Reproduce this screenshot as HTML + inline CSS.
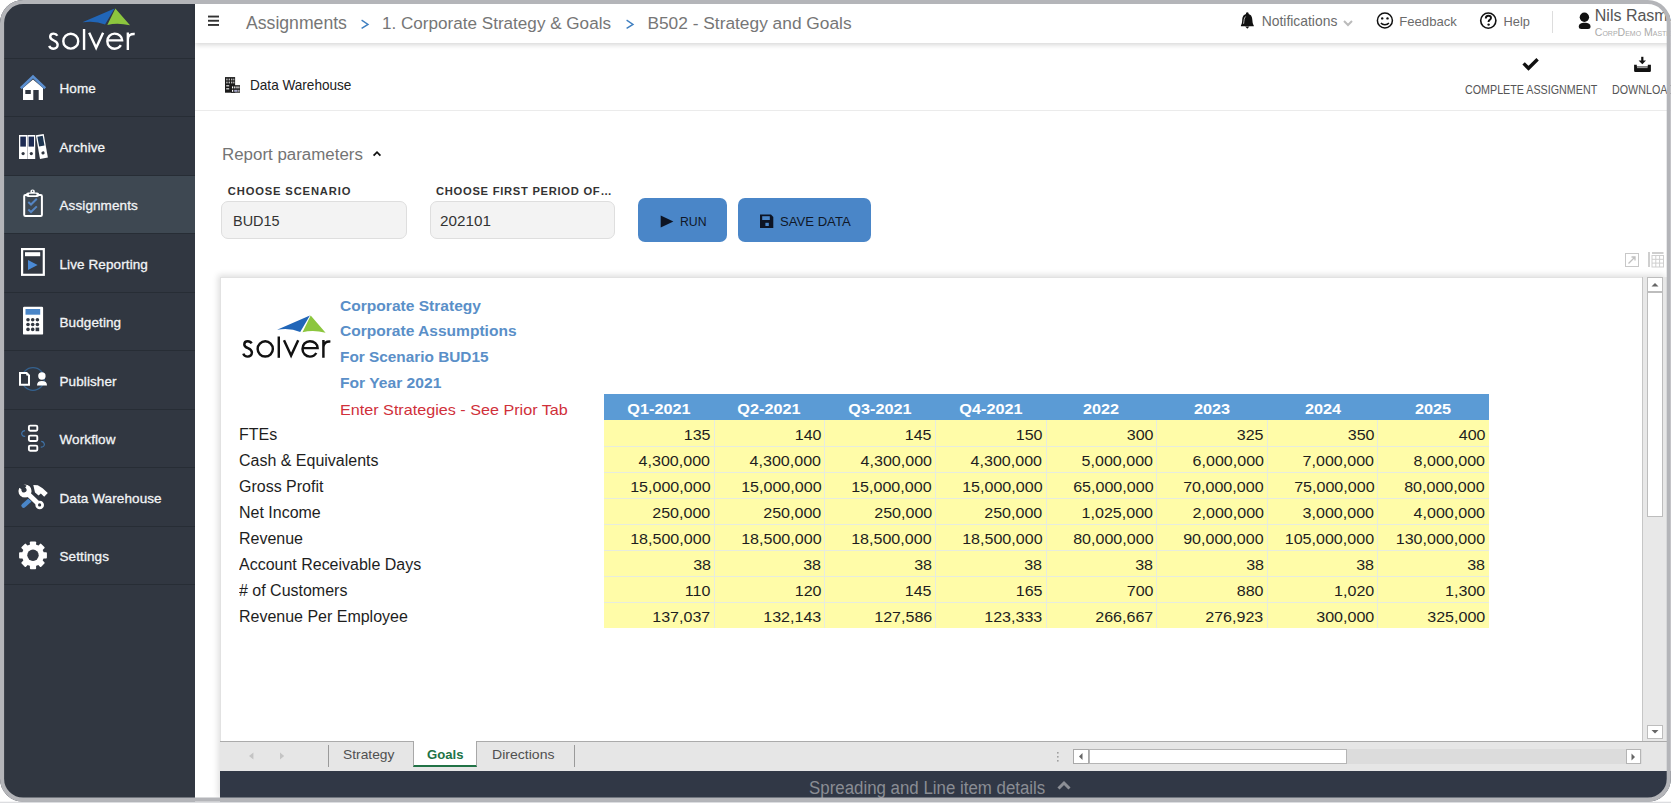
<!DOCTYPE html>
<html><head><meta charset="utf-8"><style>
html,body{margin:0;padding:0;width:1671px;height:803px;overflow:hidden;background:#fff;}
body{position:relative;font-family:"Liberation Sans", sans-serif;}
.t{position:absolute;white-space:nowrap;line-height:1;}
.r{position:absolute;}
</style></head><body>
<div class="r" style="left:0px;top:0px;width:195px;height:803px;background:#313741"></div>
<div class="r" style="left:0px;top:175.5px;width:195px;height:58px;background:#3e4852"></div>
<div class="r" style="left:0px;top:57.5px;width:195px;height:1px;background:#272d35"></div>
<div class="r" style="left:0px;top:116.0px;width:195px;height:1px;background:#272d35"></div>
<div class="r" style="left:0px;top:174.5px;width:195px;height:1px;background:#272d35"></div>
<div class="r" style="left:0px;top:233.0px;width:195px;height:1px;background:#272d35"></div>
<div class="r" style="left:0px;top:291.5px;width:195px;height:1px;background:#272d35"></div>
<div class="r" style="left:0px;top:350.0px;width:195px;height:1px;background:#272d35"></div>
<div class="r" style="left:0px;top:408.5px;width:195px;height:1px;background:#272d35"></div>
<div class="r" style="left:0px;top:467.0px;width:195px;height:1px;background:#272d35"></div>
<div class="r" style="left:0px;top:525.5px;width:195px;height:1px;background:#272d35"></div>
<div class="r" style="left:0px;top:584.0px;width:195px;height:1px;background:#272d35"></div>
<div class="t" style="left:59.50px;top:82px;font-size:13.5px;color:#f2f4f6;font-weight:400;-webkit-text-stroke:0.3px #f2f4f6;letter-spacing:0.1px">Home</div>
<div class="t" style="left:59.50px;top:141px;font-size:13.5px;color:#f2f4f6;font-weight:400;-webkit-text-stroke:0.3px #f2f4f6;letter-spacing:0.1px">Archive</div>
<div class="t" style="left:59.50px;top:199px;font-size:13.5px;color:#f2f4f6;font-weight:400;-webkit-text-stroke:0.3px #f2f4f6;letter-spacing:0.1px">Assignments</div>
<div class="t" style="left:59.50px;top:258px;font-size:13.5px;color:#f2f4f6;font-weight:400;-webkit-text-stroke:0.3px #f2f4f6;letter-spacing:0.1px">Live Reporting</div>
<div class="t" style="left:59.50px;top:316px;font-size:13.5px;color:#f2f4f6;font-weight:400;-webkit-text-stroke:0.3px #f2f4f6;letter-spacing:0.1px">Budgeting</div>
<div class="t" style="left:59.50px;top:375px;font-size:13.5px;color:#f2f4f6;font-weight:400;-webkit-text-stroke:0.3px #f2f4f6;letter-spacing:0.1px">Publisher</div>
<div class="t" style="left:59.50px;top:433px;font-size:13.5px;color:#f2f4f6;font-weight:400;-webkit-text-stroke:0.3px #f2f4f6;letter-spacing:0.1px">Workflow</div>
<div class="t" style="left:59.50px;top:492px;font-size:13.5px;color:#f2f4f6;font-weight:400;-webkit-text-stroke:0.3px #f2f4f6;letter-spacing:0.1px">Data Warehouse</div>
<div class="t" style="left:59.50px;top:550px;font-size:13.5px;color:#f2f4f6;font-weight:400;-webkit-text-stroke:0.3px #f2f4f6;letter-spacing:0.1px">Settings</div>
<svg class="r" style="left:44.1px;top:3.44px" width="98.20" height="51.06" viewBox="0 0 100 52">
<path d="M39.1 19.7 L71.9 5.5 L62.2 21.9 Q52 17.6 39.1 19.7Z" fill="#2166b8"/>
<path d="M72.7 5.5 L87.6 22.7 Q75 19.6 64.5 22.3Z" fill="#8cc63e"/>
<g fill="none" stroke="#ffffff" stroke-width="2.45">
<path d="M13.6 33.4 C12.8 31.9 11.4 31.2 9.8 31.2 C7.6 31.2 6.3 32.6 6.3 34.4 C6.3 36.4 7.9 37.3 10 38.2 C12.5 39.3 13.9 40.5 13.9 42.6 C13.9 45.1 12 46.6 9.7 46.6 C7.6 46.6 6 45.5 5.3 43.6"/>
<circle cx="27.25" cy="38.9" r="7.6"/>
<path d="M40.8 26.5 V47.8"/>
<path d="M46 30.2 L53.1 45.6 L60.2 30.2" stroke-linejoin="miter"/>
<path d="M64.5 38.1 H79.6 C79.6 34.2 76.2 31.2 71.9 31.2 C67.6 31.2 64.5 34.6 64.5 38.9 C64.5 43.3 67.8 46.6 71.9 46.6 C74.8 46.6 77 45.2 78.3 43"/>
<path d="M85.4 30 V47.8 M85.4 37 C85.6 33.2 88.2 31.2 92.4 31.6"/>
</g></svg>

<svg class="r" style="left:14px;top:68px" width="40" height="40" viewBox="0 0 40 40">
<path d="M9 20 L19 11.5 L29 20 V32 H9Z" fill="#fff"/>
<rect x="11.3" y="22" width="5.5" height="4" fill="#313741"/>
<rect x="19.3" y="22" width="5.4" height="10" fill="#313741"/>
<path d="M6.8 20.2 L19 8.6 L31.2 20.2" fill="none" stroke="#5b8fd0" stroke-width="2.6"/>
</svg>
<svg class="r" style="left:14px;top:128px" width="40" height="40" viewBox="0 0 40 40">
<rect x="5" y="7" width="8.2" height="24" fill="#fff"/>
<rect x="13.4" y="7" width="7.8" height="24" fill="#fff"/>
<rect x="6.3" y="8.6" width="5.6" height="10" fill="#1d2b52"/>
<rect x="14.6" y="8.6" width="5.4" height="10" fill="#1d2b52"/>
<circle cx="9.1" cy="25.6" r="1.6" fill="#313741"/><circle cx="17.3" cy="25.6" r="1.6" fill="#313741"/>
<g transform="rotate(-10 26 31)"><rect x="26" y="7" width="8" height="24" fill="#fff"/><rect x="27.3" y="8.6" width="5.4" height="10" fill="#1d3550"/><circle cx="30" cy="25.6" r="1.6" fill="#313741"/></g>
</svg>
<svg class="r" style="left:14px;top:186px" width="40" height="40" viewBox="0 0 40 40">
<rect x="10.2" y="9" width="17.7" height="21" rx="1.2" fill="none" stroke="#fff" stroke-width="2"/>
<rect x="12" y="6.4" width="13.2" height="4.6" rx="2.2" fill="#fff"/>
<circle cx="18.6" cy="5.9" r="2.3" fill="#fff"/>
<circle cx="18.6" cy="5.2" r="0.7" fill="#3e4852"/>
<rect x="14.8" y="7.7" width="7.8" height="1.6" rx="0.8" fill="#3e4852"/>
<path d="M14.3 16 L17 18.5 L22.8 12.8 M14.3 23.5 L17 26 L22.8 20.4" fill="none" stroke="#5585c4" stroke-width="2"/>
</svg>
<svg class="r" style="left:14px;top:244px" width="40" height="40" viewBox="0 0 40 40">
<rect x="8.1" y="5.1" width="21.7" height="25.7" fill="none" stroke="#fff" stroke-width="2.2"/>
<rect x="11" y="8.2" width="15.2" height="4" fill="#fff"/>
<path d="M14 16 L23.6 21 L14 26Z" fill="#4a8ad6"/>
</svg>
<svg class="r" style="left:14px;top:304px" width="40" height="40" viewBox="0 0 40 40">
<rect x="9" y="2.7" width="20.1" height="27.9" rx="1.2" fill="#fff"/>
<rect x="11.5" y="5" width="14.7" height="5.7" fill="#4a86c8"/>
<g fill="#313741"><circle cx="14" cy="15.7" r="1.8"/><circle cx="18.7" cy="15.7" r="1.8"/><circle cx="23.4" cy="15.7" r="1.8"/>
<circle cx="14" cy="20.5" r="1.8"/><circle cx="18.7" cy="20.5" r="1.8"/><circle cx="23.4" cy="20.5" r="1.8"/>
<circle cx="14" cy="25.4" r="1.8"/><circle cx="18.7" cy="25.4" r="1.8"/><rect x="21.6" y="23.6" width="3.6" height="3.6"/></g>
</svg>
<svg class="r" style="left:14px;top:362px" width="40" height="40" viewBox="0 0 40 40">
<circle cx="19" cy="17" r="11.3" fill="none" stroke="#35628f" stroke-width="1.2"/>
<path d="M6 11 H12.6 L15 13.4 V22.7 H6Z" fill="#313741" stroke="#fff" stroke-width="2"/>
<path d="M12.3 10.5 V13.6 H15.4" fill="#fff"/>
<rect x="17" y="8" width="4" height="18" fill="#313741"/>
<circle cx="27.9" cy="14" r="3.7" fill="#fff"/>
<path d="M23 23.5 C23 20.4 24.6 19 27.9 19 C31.3 19 33 20.4 33 23.5Z" fill="#fff"/>
</svg>
<svg class="r" style="left:14px;top:420px" width="40" height="40" viewBox="0 0 40 40">
<g fill="none" stroke="#fff" stroke-width="1.9">
<rect x="14.9" y="5.6" width="8.4" height="5.2" rx="1.2"/>
<rect x="14.9" y="15.6" width="8.4" height="5.4" rx="1.2"/>
<rect x="14.9" y="25.6" width="8.4" height="5.2" rx="1.2"/></g>
<path d="M11 10.6 C8 10.8 7 13.5 8.2 15.2 C9 16.3 10 16.6 11.2 16.4" fill="none" stroke="#3f73a8" stroke-width="1.2"/>
<path d="M27.2 21.4 C30.2 21.6 31 24.3 29.8 26 C29 27 28 27.3 26.8 27.2" fill="none" stroke="#3f73a8" stroke-width="1.2"/>
</svg>
<svg class="r" style="left:14px;top:478px" width="40" height="40" viewBox="0 0 40 40">
<path d="M9.6 27.6 L16.4 21.6" stroke="#4a86c8" stroke-width="4.6" stroke-linecap="round"/>
<path d="M19.3 7 L23.8 7.2 L28.6 10.2 L33.8 15 L30.2 18.8 L26.8 15.6 L24.6 17.4 L21 14.5 Z" fill="#fff"/>
<g stroke="#313741" stroke-width="1">
<path d="M13 15 L25.7 27" stroke-width="6.4"/>
<circle cx="11" cy="13" r="7.1"/>
</g>
<path d="M13 15 L25.7 27" stroke="#fff" stroke-width="5"/>
<circle cx="25.7" cy="27" r="4.3" fill="#fff"/>
<circle cx="25.6" cy="26.9" r="1.6" fill="#313741"/>
<circle cx="11" cy="13" r="6.6" fill="#fff"/>
<g transform="rotate(-18 11 13)"><path d="M9.6 11.4 L4 5.8 L8.8 3 L14.2 8.4 Z" fill="#313741"/>
<circle cx="10.4" cy="11.6" r="2.6" fill="#313741"/></g>
</svg>
<svg class="r" style="left:14px;top:536px" width="40" height="40" viewBox="0 0 40 40">
<g transform="translate(19 19.3)" fill="#fff">
<circle r="11"/>
<rect x="-3.1" y="-13.9" width="6.2" height="6" rx="0.9"/>
<rect x="-3.1" y="-13.9" width="6.2" height="6" rx="0.9" transform="rotate(45)"/>
<rect x="-3.1" y="-13.9" width="6.2" height="6" rx="0.9" transform="rotate(90)"/>
<rect x="-3.1" y="-13.9" width="6.2" height="6" rx="0.9" transform="rotate(135)"/>
<rect x="-3.1" y="-13.9" width="6.2" height="6" rx="0.9" transform="rotate(180)"/>
<rect x="-3.1" y="-13.9" width="6.2" height="6" rx="0.9" transform="rotate(225)"/>
<rect x="-3.1" y="-13.9" width="6.2" height="6" rx="0.9" transform="rotate(270)"/>
<rect x="-3.1" y="-13.9" width="6.2" height="6" rx="0.9" transform="rotate(315)"/>
<circle r="5.7" fill="#313741"/>
</g></svg>
<div class="r" style="left:195px;top:0px;width:1476px;height:43px;background:#fff;box-shadow:0 2px 5px rgba(0,0,0,0.16);z-index:2"></div>
<svg class="r" style="left:207px;top:14px;z-index:3" width="14" height="14" viewBox="0 0 14 14"><g fill="#333"><rect x="1" y="1.6" width="11" height="1.9"/><rect x="1" y="5.8" width="11" height="1.9"/><rect x="1" y="10" width="11" height="1.9"/></g></svg>
<div class="t" style="left:246.00px;top:15px;font-size:17.64px;color:#767676;font-weight:400;z-index:3;">Assignments</div>
<svg class="r" style="left:355px;top:14px;z-index:3" width="20" height="20" viewBox="0 0 20 20"><path d="M6.6 6.2 L13 10.4 L6.6 14.4" stroke="#3f7fc0" stroke-width="1.4" fill="none"/></svg>
<div class="t" style="left:382.00px;top:15px;font-size:17.1px;color:#767676;font-weight:400;z-index:3;">1. Corporate Strategy &amp; Goals</div>
<svg class="r" style="left:619.5px;top:14px;z-index:3" width="20" height="20" viewBox="0 0 20 20"><path d="M6.6 6.2 L13 10.4 L6.6 14.4" stroke="#3f7fc0" stroke-width="1.4" fill="none"/></svg>
<div class="t" style="left:647.40px;top:15px;font-size:17.34px;color:#767676;font-weight:400;z-index:3;">B502 - Strategy and Goals</div>
<div class="t" style="left:1261.70px;top:15px;font-size:13.9px;color:#6b6b6b;font-weight:400;z-index:3;">Notifications</div>
<div class="t" style="left:1399.30px;top:15px;font-size:13.1px;color:#6b6b6b;font-weight:400;z-index:3;">Feedback</div>
<div class="t" style="left:1503.60px;top:16px;font-size:12.8px;color:#6b6b6b;font-weight:400;z-index:3;">Help</div>
<div class="t" style="left:1594.80px;top:8px;font-size:16px;color:#555;font-weight:400;z-index:3;">Nils Rasmussen</div>
<div class="t" style="left:1594.80px;top:27px;font-size:10.5px;color:#aaa;font-weight:400;z-index:3;font-variant:small-caps;">CorpDemo Master</div>
<svg class="r" style="left:1236px;top:6px;z-index:3" width="24" height="28" viewBox="0 0 24 28">
<path d="M11.3 6.3 C10.2 6.3 9.8 7.2 10 8 C7 8.8 6.3 11.5 6.2 14.5 C6 17.6 5.3 18.8 4.9 19.4 L4.9 20.2 H17.8 V19.4 C17.2 18.6 16.6 17.4 16.4 14.5 C16.2 11.4 15.6 8.8 12.6 8 C12.8 7.2 12.4 6.3 11.3 6.3Z" fill="#111"/>
<path d="M9.2 20.6 L11.3 22.7 L13.4 20.6Z" fill="#111"/>
<path d="M7.6 17.8 C8 15 8 12 9.6 10.5" stroke="#fff" stroke-width="0.7" fill="none"/>
</svg>
<svg class="r" style="left:1342px;top:18px;z-index:3" width="12" height="10" viewBox="0 0 12 10"><path d="M2 3 L6 7 L10 3" stroke="#bbb" stroke-width="2" fill="none"/></svg>
<svg class="r" style="left:1372px;top:6px;z-index:3" width="28" height="28" viewBox="0 0 28 28">
<circle cx="12.9" cy="14.5" r="7.5" fill="none" stroke="#111" stroke-width="1.5"/>
<circle cx="10.2" cy="12.4" r="1.2" fill="#111"/><circle cx="15.5" cy="12.4" r="1.2" fill="#111"/>
<path d="M8.9 17 C10.6 19.3 15.2 19.3 16.9 17" stroke="#111" stroke-width="1.4" fill="none"/>
</svg>
<svg class="r" style="left:1476px;top:6px;z-index:3" width="24" height="28" viewBox="0 0 24 28">
<circle cx="12.3" cy="14.6" r="7.6" fill="none" stroke="#111" stroke-width="1.6"/>
<path d="M9.8 12.4 C9.8 10.6 11 9.7 12.4 9.7 C13.9 9.7 15 10.6 15 12 C15 13.6 13 13.8 12.6 15.4 V16" stroke="#111" stroke-width="1.9" fill="none"/>
<circle cx="12.6" cy="18.6" r="1.2" fill="#111"/>
</svg>
<div class="r" style="left:1552px;top:11px;width:1px;height:22px;background:#ddd;z-index:3"></div>
<svg class="r" style="left:1572px;top:6px;z-index:3" width="24" height="28" viewBox="0 0 24 28">
<circle cx="12.4" cy="11.3" r="4.7" fill="#111"/>
<path d="M6.8 20.6 C6.8 17.8 9 16.7 12.6 16.7 C16.3 16.7 18.5 17.8 18.5 20.6 C18.5 22.4 17.6 23 16 23 H9.3 C7.7 23 6.8 22.4 6.8 20.6Z" fill="#111"/>
</svg>
<div class="r" style="left:195px;top:110px;width:1476px;height:1px;background:#ebebeb"></div>
<svg class="r" style="left:218px;top:70px" width="28" height="28" viewBox="0 0 28 28">
<rect x="7" y="7.1" width="10.1" height="15.6" fill="#1a1a1a"/>
<rect x="13" y="15.2" width="9" height="7.5" fill="#1a1a1a"/>
<g fill="#bbb"><rect x="8.2" y="8.6" width="1.4" height="1.8"/><rect x="10.6" y="8.6" width="1.4" height="1.8"/><rect x="13" y="8.6" width="1.4" height="1.8"/><rect x="15.2" y="8.6" width="1.2" height="1.8"/>
<rect x="8.2" y="11.6" width="1.4" height="1.8"/><rect x="10.6" y="11.6" width="1.4" height="1.8"/><rect x="13" y="11.6" width="1.4" height="1.8"/><rect x="15.2" y="11.6" width="1.2" height="1.8"/>
<rect x="8.2" y="15" width="3" height="1.5"/><rect x="8.2" y="18" width="3" height="1.5"/></g>
<g fill="#fff"><rect x="14" y="16.4" width="1.2" height="2"/><rect x="16.2" y="16.4" width="1.2" height="2"/><rect x="18.4" y="16.4" width="1.2" height="2"/><rect x="20.4" y="16.4" width="1" height="2"/>
<rect x="14" y="19.8" width="1.2" height="2"/><rect x="16.2" y="19.8" width="3.4" height="2" fill="#aac"/><rect x="20.4" y="19.8" width="1" height="2"/></g>
</svg>
<div class="t" style="left:249.80px;top:78px;font-size:14.8px;color:#222;font-weight:400;transform:scaleX(0.9180);transform-origin:left;">Data Warehouse</div>
<svg class="r" style="left:1516px;top:50px" width="150" height="30" viewBox="0 0 150 30">
<path d="M7.6 13.4 L12.5 18.3 L21.6 9.2" stroke="#111" stroke-width="3.4" fill="none"/>
<path d="M126.3 6.8 V11.6" stroke="#111" stroke-width="2.2" fill="none"/>
<path d="M122.6 10.4 L126.3 14.2 L130 10.4Z" fill="#111"/>
<path d="M118.1 14.8 H120.8 V16.6 H131.8 V14.8 H134.9 V20.8 Q134.9 22 133.7 22 H119.3 Q118.1 22 118.1 20.8Z" fill="#111"/>
<rect x="121" y="17.2" width="10.6" height="0.9" fill="#bbb"/>
</svg>
<div class="t" style="left:1464.50px;top:84px;font-size:12.1px;color:#555;font-weight:400;transform:scaleX(0.8860);transform-origin:left;">COMPLETE ASSIGNMENT</div>
<div class="t" style="left:1611.60px;top:84px;font-size:12.1px;color:#555;font-weight:400;transform:scaleX(0.8860);transform-origin:left;">DOWNLOAD</div>
<div class="t" style="left:221.60px;top:146px;font-size:17.3px;color:#747474;font-weight:400;transform:scaleX(0.9780);transform-origin:left;">Report parameters</div>
<svg class="r" style="left:370px;top:148px" width="14" height="12" viewBox="0 0 14 12"><path d="M3.6 7.6 L7 4.2 L10.4 7.6" stroke="#111" stroke-width="1.8" fill="none"/></svg>
<div class="t" style="left:227.80px;top:186px;font-size:11.2px;color:#333;font-weight:700;letter-spacing:0.85px">CHOOSE SCENARIO</div>
<div class="t" style="left:436.00px;top:186px;font-size:11.2px;color:#333;font-weight:700;letter-spacing:0.72px">CHOOSE FIRST PERIOD OF…</div>
<div class="r" style="left:221px;top:201.4px;width:185.6px;height:37.6px;background:#f3f3f3;border:1px solid #dedede;border-radius:7px;box-sizing:border-box"></div>
<div class="r" style="left:430px;top:201.4px;width:185.4px;height:37.6px;background:#f3f3f3;border:1px solid #dedede;border-radius:7px;box-sizing:border-box"></div>
<div class="t" style="left:232.60px;top:214px;font-size:14.8px;color:#333;font-weight:400;transform:scaleX(0.9770);transform-origin:left;">BUD15</div>
<div class="t" style="left:440.00px;top:214px;font-size:14.8px;color:#333;font-weight:400;transform:scaleX(1.0300);transform-origin:left;">202101</div>
<div class="r" style="left:637.5px;top:198.2px;width:89.5px;height:43.4px;background:#4a86c8;border-radius:7px"></div>
<div class="r" style="left:738px;top:198.2px;width:133px;height:43.4px;background:#4a86c8;border-radius:7px"></div>
<svg class="r" style="left:655px;top:210px" width="24" height="22" viewBox="0 0 24 22"><path d="M5.7 5.4 L18.4 11.4 L5.7 17.4Z" fill="#0d1424"/></svg>
<svg class="r" style="left:755px;top:210px" width="24" height="22" viewBox="0 0 24 22"><path d="M5 4.6 H16 L18.3 6.9 V18 H5Z" fill="#0d1424"/><rect x="7.2" y="6.2" width="7.6" height="3.8" fill="#4a86c8"/><rect x="10.4" y="12.8" width="3.4" height="3.2" fill="#4a86c8"/></svg>
<div class="t" style="left:680.00px;top:215px;font-size:13.4px;color:#101828;font-weight:400;transform:scaleX(0.9170);transform-origin:left;">RUN</div>
<div class="t" style="left:780.00px;top:215px;font-size:13.4px;color:#101828;font-weight:400;transform:scaleX(0.9790);transform-origin:left;">SAVE DATA</div>
<div class="r" style="left:219.5px;top:276.5px;width:1447px;height:522px;background:#fff;border-top:1px solid #e2e2e2;border-left:1px solid #e2e2e2;box-shadow:-2px -2px 6px rgba(0,0,0,0.13);box-sizing:border-box"></div>
<svg class="r" style="left:1620px;top:248px" width="50" height="24" viewBox="0 0 50 24">
<rect x="5.5" y="5.5" width="13" height="13" fill="none" stroke="#c8c8c8" stroke-width="1"/>
<path d="M8.5 15.5 L15 9 M11.5 9 H15 V12.5" stroke="#c0c0c0" stroke-width="1.3" fill="none"/>
<g fill="#cfcfcf"><rect x="28" y="4" width="2" height="15"/><rect x="32" y="4" width="11.5" height="2"/>
<rect x="32" y="7.5" width="11.5" height="11.5" fill="none" stroke="#cfcfcf" stroke-width="1"/></g>
<path d="M32 11.3 H43.5 M32 15.1 H43.5 M35.8 7.5 V19 M39.6 7.5 V19" stroke="#cfcfcf" stroke-width="1"/>
</svg>
<div class="r" style="left:1642px;top:277px;width:25px;height:464px;background:#e8e8e8;border-left:1px solid #c6c6c6;box-sizing:border-box"></div>
<div class="r" style="left:1647px;top:277.4px;width:15.5px;height:15px;background:#fff;border:1px solid #bdbdbd;box-sizing:border-box"></div>
<div class="r" style="left:1647px;top:292.3px;width:15.7px;height:224.7px;background:#fff;border:1px solid #bdbdbd;box-sizing:border-box"></div>
<div class="r" style="left:1647px;top:724.6px;width:15.5px;height:14.5px;background:#fff;border:1px solid #bdbdbd;box-sizing:border-box"></div>
<svg class="r" style="left:1647px;top:277px" width="16" height="16" viewBox="0 0 16 16"><path d="M4.5 9.5 L8 6 L11.5 9.5Z" fill="#666"/></svg>
<svg class="r" style="left:1647px;top:724px" width="16" height="16" viewBox="0 0 16 16"><path d="M4.5 6 L8 9.5 L11.5 6Z" fill="#666"/></svg>
<div class="r" style="left:220px;top:741px;width:1447px;height:30px;background:#e6e6e6;border-top:1px solid #ababab;box-sizing:border-box"></div>
<svg class="r" style="left:240px;top:745px" width="60" height="22" viewBox="0 0 60 22"><path d="M13.4 7.5 L9 11 L13.4 14.5Z M40 7.5 L44.2 11 L40 14.5Z" fill="#c4c4c4"/></svg>
<div class="r" style="left:328px;top:745px;width:1px;height:21.5px;background:#9a9a9a"></div>
<div class="r" style="left:573.5px;top:745px;width:1px;height:21.5px;background:#9a9a9a"></div>
<div class="r" style="left:413px;top:741px;width:64.3px;height:26.3px;background:#fff;border-left:1px solid #a8a8a8;border-right:1px solid #a8a8a8;border-bottom:2px solid #217346;box-sizing:border-box"></div>
<div class="t" style="left:342.60px;top:749px;font-size:12.9px;color:#505050;font-weight:400;transform:scaleX(1.0700);transform-origin:left;">Strategy</div>
<div class="t" style="left:427.00px;top:749px;font-size:12.9px;color:#217346;font-weight:700;transform:scaleX(1.0180);transform-origin:left;">Goals</div>
<div class="t" style="left:491.50px;top:749px;font-size:12.9px;color:#505050;font-weight:400;transform:scaleX(1.0900);transform-origin:left;">Directions</div>
<svg class="r" style="left:1050px;top:745px" width="20" height="22" viewBox="0 0 20 22"><g fill="#a0a0a0"><rect x="7" y="7" width="1.6" height="1.6"/><rect x="7" y="11" width="1.6" height="1.6"/><rect x="7" y="15" width="1.6" height="1.6"/></g></svg>
<div class="r" style="left:1072.6px;top:748.8px;width:569px;height:15.7px;background:#dcdcdc"></div>
<div class="r" style="left:1072.6px;top:748.8px;width:16.5px;height:15.7px;background:#fff;border:1px solid #a9a9a9;box-sizing:border-box"></div>
<div class="r" style="left:1088.9px;top:748.8px;width:258.6px;height:15.7px;background:#fff;border:1px solid #b5b5b5;box-sizing:border-box"></div>
<div class="r" style="left:1625.8px;top:749.4px;width:15.5px;height:15px;background:#fff;border:1px solid #b5b5b5;box-sizing:border-box"></div>
<svg class="r" style="left:1072px;top:748px" width="18" height="18" viewBox="0 0 18 18"><path d="M10.5 5 L7 8.5 L10.5 12Z" fill="#666"/></svg>
<svg class="r" style="left:1625px;top:749px" width="18" height="18" viewBox="0 0 18 18"><path d="M6.5 4.5 L10 8 L6.5 11.5Z" fill="#666"/></svg>
<div class="r" style="left:220px;top:771px;width:1451px;height:32px;background:#313846"></div>
<div class="t" style="left:809.40px;top:779px;font-size:18px;color:#8a8d94;font-weight:400;transform:scaleX(0.9370);transform-origin:left;">Spreading and Line item details</div>
<svg class="r" style="left:1054px;top:776px" width="20" height="18" viewBox="0 0 20 18"><path d="M4.5 12.5 L10 7 L15.5 12.5" stroke="#8c8f96" stroke-width="3" fill="none"/></svg>
<svg class="r" style="left:237.8px;top:310px" width="100.00" height="52.00" viewBox="0 0 100 52">
<path d="M39.1 19.7 L71.9 5.5 L62.2 21.9 Q52 17.6 39.1 19.7Z" fill="#2166b8"/>
<path d="M72.7 5.5 L87.6 22.7 Q75 19.6 64.5 22.3Z" fill="#8cc63e"/>
<g fill="none" stroke="#111111" stroke-width="2.45">
<path d="M13.6 33.4 C12.8 31.9 11.4 31.2 9.8 31.2 C7.6 31.2 6.3 32.6 6.3 34.4 C6.3 36.4 7.9 37.3 10 38.2 C12.5 39.3 13.9 40.5 13.9 42.6 C13.9 45.1 12 46.6 9.7 46.6 C7.6 46.6 6 45.5 5.3 43.6"/>
<circle cx="27.25" cy="38.9" r="7.6"/>
<path d="M40.8 26.5 V47.8"/>
<path d="M46 30.2 L53.1 45.6 L60.2 30.2" stroke-linejoin="miter"/>
<path d="M64.5 38.1 H79.6 C79.6 34.2 76.2 31.2 71.9 31.2 C67.6 31.2 64.5 34.6 64.5 38.9 C64.5 43.3 67.8 46.6 71.9 46.6 C74.8 46.6 77 45.2 78.3 43"/>
<path d="M85.4 30 V47.8 M85.4 37 C85.6 33.2 88.2 31.2 92.4 31.6"/>
</g></svg>
<div class="t" style="left:339.60px;top:299px;font-size:14.4px;color:#5a8fc8;font-weight:700;transform:scaleX(1.0819);transform-origin:left">Corporate Strategy</div>
<div class="t" style="left:339.60px;top:324px;font-size:14.4px;color:#5a8fc8;font-weight:700;transform:scaleX(1.0806);transform-origin:left">Corporate Assumptions</div>
<div class="t" style="left:339.60px;top:350px;font-size:14.4px;color:#5a8fc8;font-weight:700;transform:scaleX(1.0674);transform-origin:left">For Scenario BUD15</div>
<div class="t" style="left:339.60px;top:376px;font-size:14.4px;color:#5a8fc8;font-weight:700;transform:scaleX(1.0854);transform-origin:left">For Year 2021</div>
<div class="t" style="left:339.90px;top:402px;font-size:15.0px;color:#d0303a;font-weight:400;transform:scaleX(1.077);transform-origin:left">Enter Strategies - See Prior Tab</div>
<div class="r" style="left:603.5px;top:393.7px;width:885.12px;height:26.6px;background:#5b9bd5"></div>
<div class="r" style="left:603.5px;top:420.3px;width:885.12px;height:208px;background:#fffca8"></div>
<div class="r" style="left:713.64px;top:420.3px;width:1px;height:208px;background:#e7ecde"></div>
<div class="r" style="left:824.28px;top:420.3px;width:1px;height:208px;background:#e7ecde"></div>
<div class="r" style="left:934.92px;top:420.3px;width:1px;height:208px;background:#e7ecde"></div>
<div class="r" style="left:1045.56px;top:420.3px;width:1px;height:208px;background:#e7ecde"></div>
<div class="r" style="left:1156.2px;top:420.3px;width:1px;height:208px;background:#e7ecde"></div>
<div class="r" style="left:1266.84px;top:420.3px;width:1px;height:208px;background:#e7ecde"></div>
<div class="r" style="left:1377.48px;top:420.3px;width:1px;height:208px;background:#e7ecde"></div>
<div class="r" style="left:603.5px;top:445.8px;width:885.12px;height:1px;background:#e7ecde"></div>
<div class="r" style="left:603.5px;top:471.8px;width:885.12px;height:1px;background:#e7ecde"></div>
<div class="r" style="left:603.5px;top:497.8px;width:885.12px;height:1px;background:#e7ecde"></div>
<div class="r" style="left:603.5px;top:523.8px;width:885.12px;height:1px;background:#e7ecde"></div>
<div class="r" style="left:603.5px;top:549.8px;width:885.12px;height:1px;background:#e7ecde"></div>
<div class="r" style="left:603.5px;top:575.8px;width:885.12px;height:1px;background:#e7ecde"></div>
<div class="r" style="left:603.5px;top:601.8px;width:885.12px;height:1px;background:#e7ecde"></div>
<div class="t" style="left:358.82px;width:600px;text-align:center;top:401px;font-size:15.2px;color:#fff;font-weight:700;transform:scaleX(1.0700);transform-origin:center;">Q1-2021</div>
<div class="t" style="left:469.46px;width:600px;text-align:center;top:401px;font-size:15.2px;color:#fff;font-weight:700;transform:scaleX(1.0700);transform-origin:center;">Q2-2021</div>
<div class="t" style="left:580.10px;width:600px;text-align:center;top:401px;font-size:15.2px;color:#fff;font-weight:700;transform:scaleX(1.0700);transform-origin:center;">Q3-2021</div>
<div class="t" style="left:690.74px;width:600px;text-align:center;top:401px;font-size:15.2px;color:#fff;font-weight:700;transform:scaleX(1.0700);transform-origin:center;">Q4-2021</div>
<div class="t" style="left:801.38px;width:600px;text-align:center;top:401px;font-size:15.2px;color:#fff;font-weight:700;transform:scaleX(1.0700);transform-origin:center;">2022</div>
<div class="t" style="left:912.02px;width:600px;text-align:center;top:401px;font-size:15.2px;color:#fff;font-weight:700;transform:scaleX(1.0700);transform-origin:center;">2023</div>
<div class="t" style="left:1022.66px;width:600px;text-align:center;top:401px;font-size:15.2px;color:#fff;font-weight:700;transform:scaleX(1.0700);transform-origin:center;">2024</div>
<div class="t" style="left:1133.30px;width:600px;text-align:center;top:401px;font-size:15.2px;color:#fff;font-weight:700;transform:scaleX(1.0700);transform-origin:center;">2025</div>
<div class="t" style="left:238.80px;top:427px;font-size:15.6px;color:#1e1e1e;font-weight:400;transform:scaleX(1.0250);transform-origin:left;">FTEs</div>
<div class="t" style="right:960.46px;top:427px;font-size:15.3px;color:#1e1e1e;font-weight:400;transform:scaleX(1.0500);transform-origin:right;">135</div>
<div class="t" style="right:849.82px;top:427px;font-size:15.3px;color:#1e1e1e;font-weight:400;transform:scaleX(1.0500);transform-origin:right;">140</div>
<div class="t" style="right:739.18px;top:427px;font-size:15.3px;color:#1e1e1e;font-weight:400;transform:scaleX(1.0500);transform-origin:right;">145</div>
<div class="t" style="right:628.54px;top:427px;font-size:15.3px;color:#1e1e1e;font-weight:400;transform:scaleX(1.0500);transform-origin:right;">150</div>
<div class="t" style="right:517.90px;top:427px;font-size:15.3px;color:#1e1e1e;font-weight:400;transform:scaleX(1.0500);transform-origin:right;">300</div>
<div class="t" style="right:407.26px;top:427px;font-size:15.3px;color:#1e1e1e;font-weight:400;transform:scaleX(1.0500);transform-origin:right;">325</div>
<div class="t" style="right:296.62px;top:427px;font-size:15.3px;color:#1e1e1e;font-weight:400;transform:scaleX(1.0500);transform-origin:right;">350</div>
<div class="t" style="right:185.98px;top:427px;font-size:15.3px;color:#1e1e1e;font-weight:400;transform:scaleX(1.0500);transform-origin:right;">400</div>
<div class="t" style="left:238.80px;top:453px;font-size:15.6px;color:#1e1e1e;font-weight:400;transform:scaleX(1.0250);transform-origin:left;">Cash &amp; Equivalents</div>
<div class="t" style="right:960.46px;top:453px;font-size:15.3px;color:#1e1e1e;font-weight:400;transform:scaleX(1.0500);transform-origin:right;">4,300,000</div>
<div class="t" style="right:849.82px;top:453px;font-size:15.3px;color:#1e1e1e;font-weight:400;transform:scaleX(1.0500);transform-origin:right;">4,300,000</div>
<div class="t" style="right:739.18px;top:453px;font-size:15.3px;color:#1e1e1e;font-weight:400;transform:scaleX(1.0500);transform-origin:right;">4,300,000</div>
<div class="t" style="right:628.54px;top:453px;font-size:15.3px;color:#1e1e1e;font-weight:400;transform:scaleX(1.0500);transform-origin:right;">4,300,000</div>
<div class="t" style="right:517.90px;top:453px;font-size:15.3px;color:#1e1e1e;font-weight:400;transform:scaleX(1.0500);transform-origin:right;">5,000,000</div>
<div class="t" style="right:407.26px;top:453px;font-size:15.3px;color:#1e1e1e;font-weight:400;transform:scaleX(1.0500);transform-origin:right;">6,000,000</div>
<div class="t" style="right:296.62px;top:453px;font-size:15.3px;color:#1e1e1e;font-weight:400;transform:scaleX(1.0500);transform-origin:right;">7,000,000</div>
<div class="t" style="right:185.98px;top:453px;font-size:15.3px;color:#1e1e1e;font-weight:400;transform:scaleX(1.0500);transform-origin:right;">8,000,000</div>
<div class="t" style="left:238.80px;top:479px;font-size:15.6px;color:#1e1e1e;font-weight:400;transform:scaleX(1.0250);transform-origin:left;">Gross Profit</div>
<div class="t" style="right:960.46px;top:479px;font-size:15.3px;color:#1e1e1e;font-weight:400;transform:scaleX(1.0500);transform-origin:right;">15,000,000</div>
<div class="t" style="right:849.82px;top:479px;font-size:15.3px;color:#1e1e1e;font-weight:400;transform:scaleX(1.0500);transform-origin:right;">15,000,000</div>
<div class="t" style="right:739.18px;top:479px;font-size:15.3px;color:#1e1e1e;font-weight:400;transform:scaleX(1.0500);transform-origin:right;">15,000,000</div>
<div class="t" style="right:628.54px;top:479px;font-size:15.3px;color:#1e1e1e;font-weight:400;transform:scaleX(1.0500);transform-origin:right;">15,000,000</div>
<div class="t" style="right:517.90px;top:479px;font-size:15.3px;color:#1e1e1e;font-weight:400;transform:scaleX(1.0500);transform-origin:right;">65,000,000</div>
<div class="t" style="right:407.26px;top:479px;font-size:15.3px;color:#1e1e1e;font-weight:400;transform:scaleX(1.0500);transform-origin:right;">70,000,000</div>
<div class="t" style="right:296.62px;top:479px;font-size:15.3px;color:#1e1e1e;font-weight:400;transform:scaleX(1.0500);transform-origin:right;">75,000,000</div>
<div class="t" style="right:185.98px;top:479px;font-size:15.3px;color:#1e1e1e;font-weight:400;transform:scaleX(1.0500);transform-origin:right;">80,000,000</div>
<div class="t" style="left:238.80px;top:505px;font-size:15.6px;color:#1e1e1e;font-weight:400;transform:scaleX(1.0250);transform-origin:left;">Net Income</div>
<div class="t" style="right:960.46px;top:505px;font-size:15.3px;color:#1e1e1e;font-weight:400;transform:scaleX(1.0500);transform-origin:right;">250,000</div>
<div class="t" style="right:849.82px;top:505px;font-size:15.3px;color:#1e1e1e;font-weight:400;transform:scaleX(1.0500);transform-origin:right;">250,000</div>
<div class="t" style="right:739.18px;top:505px;font-size:15.3px;color:#1e1e1e;font-weight:400;transform:scaleX(1.0500);transform-origin:right;">250,000</div>
<div class="t" style="right:628.54px;top:505px;font-size:15.3px;color:#1e1e1e;font-weight:400;transform:scaleX(1.0500);transform-origin:right;">250,000</div>
<div class="t" style="right:517.90px;top:505px;font-size:15.3px;color:#1e1e1e;font-weight:400;transform:scaleX(1.0500);transform-origin:right;">1,025,000</div>
<div class="t" style="right:407.26px;top:505px;font-size:15.3px;color:#1e1e1e;font-weight:400;transform:scaleX(1.0500);transform-origin:right;">2,000,000</div>
<div class="t" style="right:296.62px;top:505px;font-size:15.3px;color:#1e1e1e;font-weight:400;transform:scaleX(1.0500);transform-origin:right;">3,000,000</div>
<div class="t" style="right:185.98px;top:505px;font-size:15.3px;color:#1e1e1e;font-weight:400;transform:scaleX(1.0500);transform-origin:right;">4,000,000</div>
<div class="t" style="left:238.80px;top:531px;font-size:15.6px;color:#1e1e1e;font-weight:400;transform:scaleX(1.0250);transform-origin:left;">Revenue</div>
<div class="t" style="right:960.46px;top:531px;font-size:15.3px;color:#1e1e1e;font-weight:400;transform:scaleX(1.0500);transform-origin:right;">18,500,000</div>
<div class="t" style="right:849.82px;top:531px;font-size:15.3px;color:#1e1e1e;font-weight:400;transform:scaleX(1.0500);transform-origin:right;">18,500,000</div>
<div class="t" style="right:739.18px;top:531px;font-size:15.3px;color:#1e1e1e;font-weight:400;transform:scaleX(1.0500);transform-origin:right;">18,500,000</div>
<div class="t" style="right:628.54px;top:531px;font-size:15.3px;color:#1e1e1e;font-weight:400;transform:scaleX(1.0500);transform-origin:right;">18,500,000</div>
<div class="t" style="right:517.90px;top:531px;font-size:15.3px;color:#1e1e1e;font-weight:400;transform:scaleX(1.0500);transform-origin:right;">80,000,000</div>
<div class="t" style="right:407.26px;top:531px;font-size:15.3px;color:#1e1e1e;font-weight:400;transform:scaleX(1.0500);transform-origin:right;">90,000,000</div>
<div class="t" style="right:296.62px;top:531px;font-size:15.3px;color:#1e1e1e;font-weight:400;transform:scaleX(1.0500);transform-origin:right;">105,000,000</div>
<div class="t" style="right:185.98px;top:531px;font-size:15.3px;color:#1e1e1e;font-weight:400;transform:scaleX(1.0500);transform-origin:right;">130,000,000</div>
<div class="t" style="left:238.80px;top:557px;font-size:15.6px;color:#1e1e1e;font-weight:400;transform:scaleX(1.0250);transform-origin:left;">Account Receivable Days</div>
<div class="t" style="right:960.46px;top:557px;font-size:15.3px;color:#1e1e1e;font-weight:400;transform:scaleX(1.0500);transform-origin:right;">38</div>
<div class="t" style="right:849.82px;top:557px;font-size:15.3px;color:#1e1e1e;font-weight:400;transform:scaleX(1.0500);transform-origin:right;">38</div>
<div class="t" style="right:739.18px;top:557px;font-size:15.3px;color:#1e1e1e;font-weight:400;transform:scaleX(1.0500);transform-origin:right;">38</div>
<div class="t" style="right:628.54px;top:557px;font-size:15.3px;color:#1e1e1e;font-weight:400;transform:scaleX(1.0500);transform-origin:right;">38</div>
<div class="t" style="right:517.90px;top:557px;font-size:15.3px;color:#1e1e1e;font-weight:400;transform:scaleX(1.0500);transform-origin:right;">38</div>
<div class="t" style="right:407.26px;top:557px;font-size:15.3px;color:#1e1e1e;font-weight:400;transform:scaleX(1.0500);transform-origin:right;">38</div>
<div class="t" style="right:296.62px;top:557px;font-size:15.3px;color:#1e1e1e;font-weight:400;transform:scaleX(1.0500);transform-origin:right;">38</div>
<div class="t" style="right:185.98px;top:557px;font-size:15.3px;color:#1e1e1e;font-weight:400;transform:scaleX(1.0500);transform-origin:right;">38</div>
<div class="t" style="left:238.80px;top:583px;font-size:15.6px;color:#1e1e1e;font-weight:400;transform:scaleX(1.0250);transform-origin:left;"># of Customers</div>
<div class="t" style="right:960.46px;top:583px;font-size:15.3px;color:#1e1e1e;font-weight:400;transform:scaleX(1.0500);transform-origin:right;">110</div>
<div class="t" style="right:849.82px;top:583px;font-size:15.3px;color:#1e1e1e;font-weight:400;transform:scaleX(1.0500);transform-origin:right;">120</div>
<div class="t" style="right:739.18px;top:583px;font-size:15.3px;color:#1e1e1e;font-weight:400;transform:scaleX(1.0500);transform-origin:right;">145</div>
<div class="t" style="right:628.54px;top:583px;font-size:15.3px;color:#1e1e1e;font-weight:400;transform:scaleX(1.0500);transform-origin:right;">165</div>
<div class="t" style="right:517.90px;top:583px;font-size:15.3px;color:#1e1e1e;font-weight:400;transform:scaleX(1.0500);transform-origin:right;">700</div>
<div class="t" style="right:407.26px;top:583px;font-size:15.3px;color:#1e1e1e;font-weight:400;transform:scaleX(1.0500);transform-origin:right;">880</div>
<div class="t" style="right:296.62px;top:583px;font-size:15.3px;color:#1e1e1e;font-weight:400;transform:scaleX(1.0500);transform-origin:right;">1,020</div>
<div class="t" style="right:185.98px;top:583px;font-size:15.3px;color:#1e1e1e;font-weight:400;transform:scaleX(1.0500);transform-origin:right;">1,300</div>
<div class="t" style="left:238.80px;top:609px;font-size:15.6px;color:#1e1e1e;font-weight:400;transform:scaleX(1.0250);transform-origin:left;">Revenue Per Employee</div>
<div class="t" style="right:960.46px;top:609px;font-size:15.3px;color:#1e1e1e;font-weight:400;transform:scaleX(1.0500);transform-origin:right;">137,037</div>
<div class="t" style="right:849.82px;top:609px;font-size:15.3px;color:#1e1e1e;font-weight:400;transform:scaleX(1.0500);transform-origin:right;">132,143</div>
<div class="t" style="right:739.18px;top:609px;font-size:15.3px;color:#1e1e1e;font-weight:400;transform:scaleX(1.0500);transform-origin:right;">127,586</div>
<div class="t" style="right:628.54px;top:609px;font-size:15.3px;color:#1e1e1e;font-weight:400;transform:scaleX(1.0500);transform-origin:right;">123,333</div>
<div class="t" style="right:517.90px;top:609px;font-size:15.3px;color:#1e1e1e;font-weight:400;transform:scaleX(1.0500);transform-origin:right;">266,667</div>
<div class="t" style="right:407.26px;top:609px;font-size:15.3px;color:#1e1e1e;font-weight:400;transform:scaleX(1.0500);transform-origin:right;">276,923</div>
<div class="t" style="right:296.62px;top:609px;font-size:15.3px;color:#1e1e1e;font-weight:400;transform:scaleX(1.0500);transform-origin:right;">300,000</div>
<div class="t" style="right:185.98px;top:609px;font-size:15.3px;color:#1e1e1e;font-weight:400;transform:scaleX(1.0500);transform-origin:right;">325,000</div>
<svg class="r" style="left:0;top:0;z-index:50" width="1671" height="803" viewBox="0 0 1671 803">
<path fill-rule="evenodd" fill="#fff" d="M0 0 H1671 V803 H0Z M23 0 H1647.8 A23 23 0 0 1 1670.8 23 V778.7 A23 23 0 0 1 1647.8 801.7 H23 A23 23 0 0 1 0 778.7 V23 A23 23 0 0 1 23 0Z"/>
<rect x="2.05" y="2.05" width="1666.7" height="797.6" rx="21" ry="21" fill="none" stroke="#b4b5b9" stroke-width="4.1"/>
<rect x="0" y="801.7" width="1671" height="1.3" fill="#dcdde0"/>
</svg>

</body></html>
